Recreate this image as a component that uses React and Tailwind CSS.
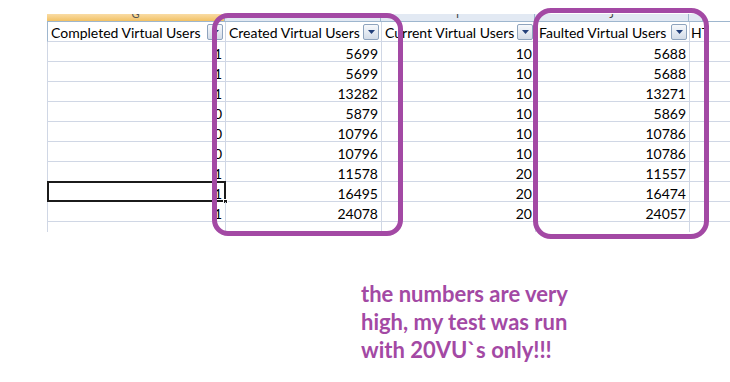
import React from "react";

const cols = [
  { w: "w-[178px]", letter: "G", title: "Completed Virtual Users" },
  { w: "w-[156px]", letter: "H", title: "Created Virtual Users" },
  { w: "w-[154px]", letter: "I", title: "Current Virtual Users" },
  { w: "w-[154px]", letter: "J", title: "Faulted Virtual Users" },
  { w: "w-[14px]", letter: "", title: "HT" },
];

const rows = [
  ["1", "5699", "10", "5688"],
  ["1", "5699", "10", "5688"],
  ["1", "13282", "10", "13271"],
  ["0", "5879", "10", "5869"],
  ["0", "10796", "10", "10786"],
  ["0", "10796", "10", "10786"],
  ["1", "11578", "20", "11557"],
  ["1", "16495", "20", "16474"],
  ["1", "24078", "20", "24057"],
];

const FilterButton = () => (
  <div className="w-[16px] h-[16px] shrink-0 mr-[2px] border border-[#8ea3bd] rounded-[2px] bg-linear-to-b from-[#f7f9fc] to-[#d3dce8] flex items-center justify-center">
    <svg width="7" height="4" viewBox="0 0 7 4">
      <path d="M0 0 H7 L3.5 4 Z" fill="#23407a" />
    </svg>
  </div>
);

const App = () => {
  return (
    <div className="w-[730px] h-[382px] bg-white relative overflow-hidden font-['Lato',sans-serif] text-black">
      <div className="pl-[47px] pt-[14px]">
        {/* column letters, cut at the top like the screenshot */}
        <div className="flex h-[8px] border-b border-[#9eb6ce]">
          {cols.map((c, i) => (
            <div
              key={i}
              className={`${c.w} shrink-0 overflow-hidden border-r border-[#9eb6ce] text-center ${i === 0 ? "bg-linear-to-b from-[#f9dca4] to-[#f2c163] text-[#555]" : "bg-[#e2e9f3] text-[#444]"}`}
            >
              <div className="-mt-[6px] text-[11px] leading-[11px]">{c.letter}</div>
            </div>
          ))}
        </div>

        {/* header row */}
        <div className="flex h-[20px] border-b border-[#d0d7e5] border-l border-l-[#9eb6ce]">
          {cols.map((c, i) => (
            <div
              key={c.title}
              className={`${c.w} shrink-0 overflow-hidden flex items-center ${i < 4 ? "border-r border-[#d0d7e5]" : ""} text-[14px] whitespace-nowrap`}
            >
              <span className={`${i < 4 ? "pl-[3px]" : "pl-[1px]"} pt-[2px] flex-1 overflow-hidden`}>{c.title}</span>
              {i < 4 && <FilterButton />}
            </div>
          ))}
        </div>

        {/* data rows */}
        {rows.map((r, ri) => (
          <div key={ri} className="flex h-[20px] border-b border-[#d0d7e5] border-l border-l-[#d0d7e5]">
            {cols.map((c, ci) => (
              <div
                key={ci}
                className={`${c.w} shrink-0 relative flex items-center justify-end pr-[3px] pt-[3px] text-[14px] ${ci < 4 ? "border-r border-[#d0d7e5]" : ""}`}
              >
                {r[ci]}
                {ri === 7 && ci === 0 && (
                  <div className="absolute -left-[1px] -top-[1px] -right-[1px] -bottom-[1px] border-2 border-[#1b1b1b]">
                    <div className="absolute -right-[4px] -bottom-[4px] w-[5px] h-[5px] bg-[#1b1b1b] border border-white" />
                  </div>
                )}
              </div>
            ))}
          </div>
        ))}
        <div className="flex h-[10px] border-l border-l-[#d0d7e5]">
          {cols.map((c, ci) => (
            <div key={ci} className={`${c.w} shrink-0 ${ci < 4 ? "border-r border-[#d0d7e5]" : ""}`} />
          ))}
        </div>
      </div>

      {/* note */}
      <div className="pl-[361px] mt-[48px] text-[#a349a4] font-bold text-[22px] leading-[28px]">
        <p>the numbers are very</p>
        <p>high, my test was run</p>
        <p>with 20VU`s only!!!</p>
      </div>

      {/* purple highlight boxes drawn over the sheet */}
      <div className="absolute left-[212px] top-[13px] w-[191px] h-[223px] border-[5px] border-[#a349a4] rounded-[16px]" />
      <div className="absolute left-[533px] top-[8px] w-[176px] h-[231px] border-[5px] border-[#a349a4] rounded-[18px]" />
    </div>
  );
};

export default App;
